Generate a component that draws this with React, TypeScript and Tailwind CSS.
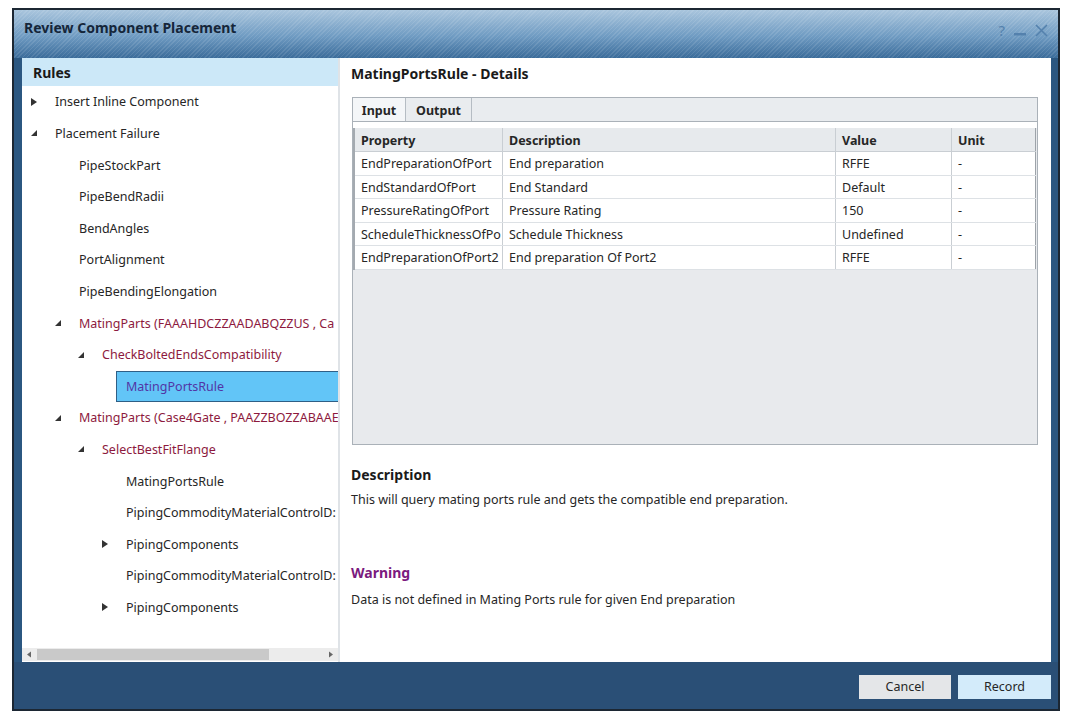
import React from 'react';

type Node = {
  label: string;
  level: number;
  arrow?: 'closed' | 'open';
  tone?: 'red';
  selected?: boolean;
};

const tree: Node[] = [
  { label: 'Insert Inline Component', level: 0, arrow: 'closed' },
  { label: 'Placement Failure', level: 0, arrow: 'open' },
  { label: 'PipeStockPart', level: 1 },
  { label: 'PipeBendRadii', level: 1 },
  { label: 'BendAngles', level: 1 },
  { label: 'PortAlignment', level: 1 },
  { label: 'PipeBendingElongation', level: 1 },
  { label: 'MatingParts (FAAAHDCZZAADABQZZUS , Ca', level: 1, arrow: 'open', tone: 'red' },
  { label: 'CheckBoltedEndsCompatibility', level: 2, arrow: 'open', tone: 'red' },
  { label: 'MatingPortsRule', level: 3, selected: true },
  { label: 'MatingParts (Case4Gate , PAAZZBOZZABAAE', level: 1, arrow: 'open', tone: 'red' },
  { label: 'SelectBestFitFlange', level: 2, arrow: 'open', tone: 'red' },
  { label: 'MatingPortsRule', level: 3 },
  { label: 'PipingCommodityMaterialControlD:', level: 3 },
  { label: 'PipingComponents', level: 3, arrow: 'closed' },
  { label: 'PipingCommodityMaterialControlD:', level: 3 },
  { label: 'PipingComponents', level: 3, arrow: 'closed' },
];

const rows = [
  ['EndPreparationOfPort', 'End preparation', 'RFFE', '-'],
  ['EndStandardOfPort', 'End Standard', 'Default', '-'],
  ['PressureRatingOfPort', 'Pressure Rating', '150', '-'],
  ['ScheduleThicknessOfPo', 'Schedule Thickness', 'Undefined', '-'],
  ['EndPreparationOfPort2', 'End preparation Of Port2', 'RFFE', '-'],
];

// indent per level, matches the tree's 23-24px steps
const indent = ['pl-[0px]', 'pl-[24px]', 'pl-[47px]', 'pl-[71px]'];

const Arrow: React.FC<{ kind: 'closed' | 'open' }> = ({ kind }) =>
  kind === 'closed' ? (
    <svg width="8" height="10" viewBox="0 0 8 10">
      <path d="M1 1 L7 5 L1 9 Z" fill="#333" />
    </svg>
  ) : (
    <svg width="8" height="8" viewBox="0 0 8 8">
      <path d="M7 1 L7 7 L1 7 Z" fill="#333" />
    </svg>
  );

const TreeRow: React.FC<{ node: Node }> = ({ node }) => {
  const color = node.selected ? 'text-[#5235a6]' : node.tone === 'red' ? 'text-[#8d1a3e]' : 'text-[#262626]';
  return (
    <div className={`h-[31.6px] flex items-center ${indent[node.level]}`}>
      {node.selected ? (
        <div className="flex-1 h-[31px] ml-[23px] flex items-center pl-[9px] pt-[2px] bg-[#62c5f7] border border-[#2f5f86] border-r-0">
          <span className={`${color} whitespace-nowrap`}>{node.label}</span>
        </div>
      ) : (
        <>
          <div className="w-[33px] pl-[8px] flex items-center shrink-0">{node.arrow && <Arrow kind={node.arrow} />}</div>
          <span className={`${color} whitespace-nowrap pt-[2px]`}>{node.label}</span>
        </>
      )}
    </div>
  );
};

const WinIcons = () => (
  <div className="flex items-center gap-[9px] text-[#5481ad] pr-[10px] pt-[2px]">
    <span className="text-[15px]">?</span>
    <svg width="12" height="14" viewBox="0 0 12 14">
      <rect x="0" y="10" width="12" height="2.5" fill="currentColor" />
    </svg>
    <svg width="13" height="13" viewBox="0 0 13 13">
      <path d="M1 1 L12 12 M12 1 L1 12" stroke="currentColor" strokeWidth="1.6" />
    </svg>
  </div>
);

const Cell: React.FC<{ last: boolean; children: React.ReactNode }> = ({ last, children }) => (
  <div className={`flex items-center pl-[6px] pt-[3px] overflow-hidden whitespace-nowrap border-r ${last ? 'border-[#9da3a9]' : 'border-[#c9ced3]'}`}>
    {children}
  </div>
);

export default function App() {
  return (
    <div className="w-[1080px] h-[719px] bg-white pt-[8px] pl-[12px] font-['Noto_Sans',sans-serif] text-[12.5px] text-[#262626]">
      <div className="w-[1048px] h-[703px] border-2 border-[#1c2733] flex flex-col bg-[#2b5781]">
        {/* title bar */}
        <div className="h-[48px] shrink-0 flex items-start justify-between pt-[7px] pl-[10px] bg-[image:repeating-linear-gradient(135deg,rgba(255,255,255,0.10)_0px,rgba(255,255,255,0.10)_1px,transparent_1px,transparent_3px),linear-gradient(to_bottom,#a9c5dd,#6f9bc2_55%,#3b6c9a)]">
          <span className="font-bold text-[14px] text-[#15263a]">Review Component Placement</span>
          <WinIcons />
        </div>

        {/* body */}
        <div className="flex-1 flex pl-[8px] pr-[7px] min-h-0">
          <div className="flex-1 flex bg-white">
            {/* rules tree */}
            <div className="w-[316px] shrink-0 flex flex-col overflow-hidden">
              <div className="h-[28px] shrink-0 flex items-center pl-[11px] bg-[#cce8f8] font-bold text-[14px] text-[#1a1a1a]">Rules</div>
              <div className="flex flex-col overflow-hidden">
                {tree.map((n, i) => (
                  <TreeRow key={i} node={n} />
                ))}
              </div>
              <div className="flex-1" />
              <div className="h-[13px] mb-[1px] shrink-0 flex items-center bg-[#ececec] px-[4px]">
                <svg width="6" height="7" viewBox="0 0 6 7"><path d="M5 0.5 L1 3.5 L5 6.5 Z" fill="#666" /></svg>
                <div className="w-[232px] h-[11px] ml-[5px] bg-[#c9c9c9]" />
                <div className="flex-1" />
                <svg width="6" height="7" viewBox="0 0 6 7"><path d="M1 0.5 L5 3.5 L1 6.5 Z" fill="#666" /></svg>
              </div>
            </div>
            <div className="w-[2px] shrink-0 bg-[#dfe3e7]" />

            {/* details */}
            <div className="flex-1 flex flex-col pl-[11px] pr-[13px]">
              <div className="h-[30px] shrink-0 flex items-center font-bold text-[14px] text-[#1a1a1a]">MatingPortsRule - Details</div>
              <div className="mt-[9px] ml-[1px] h-[348px] shrink-0 border border-[#aab1b8] flex flex-col bg-[#e8eaed]">
                <div className="h-[24px] shrink-0 flex border-b border-[#aab1b8] bg-[#e9ecef] font-bold">
                  <div className="w-[53px] flex items-center justify-center pt-[3px] bg-[#f4f6f8] border-r border-[#b5bcc3]">Input</div>
                  <div className="w-[66px] flex items-center justify-center pt-[3px] border-r border-[#b5bcc3]">Output</div>
                </div>
                <div className="h-[6px] shrink-0 bg-white" />
                <div className="border-l-2 border-[#a4aab0] mr-[1px]">
                  <div className="grid grid-cols-[148px_333px_116px_1fr] h-[24px] bg-[#e7eaed] font-bold border-b border-[#c9ced3]">
                    {['Property', 'Description', 'Value', 'Unit'].map((h, i) => (
                      <Cell key={h} last={i === 3}>{h}</Cell>
                    ))}
                  </div>
                  {rows.map((r, ri) => (
                    <div key={ri} className="grid grid-cols-[148px_333px_116px_1fr] h-[23.5px] bg-white border-b border-[#dde1e5]">
                      {r.map((c, ci) => (
                        <Cell key={ci} last={ci === 3}>{c}</Cell>
                      ))}
                    </div>
                  ))}
                </div>
              </div>

              <div className="mt-[19px] font-bold text-[14px] text-[#1a1a1a]">Description</div>
              <div className="mt-[6px]">This will query mating ports rule and gets the compatible end preparation.</div>

              <div className="mt-[52px] font-bold text-[14px] text-[#7b1a7e]">Warning</div>
              <div className="mt-[8px]">Data is not defined in Mating Ports rule for given End preparation</div>
            </div>
          </div>
        </div>

        {/* footer */}
        <div className="h-[47px] shrink-0 flex items-start justify-end gap-[7px] pt-[13px] pr-[7px] bg-[#2a4f76]">
          <button className="w-[92px] h-[24px] pt-[1px] bg-[#e4e6e8] text-[#262626]">Cancel</button>
          <button className="w-[93px] h-[24px] pt-[1px] bg-[#d3ebfa] text-[#262626]">Record</button>
        </div>
      </div>
    </div>
  );
}
